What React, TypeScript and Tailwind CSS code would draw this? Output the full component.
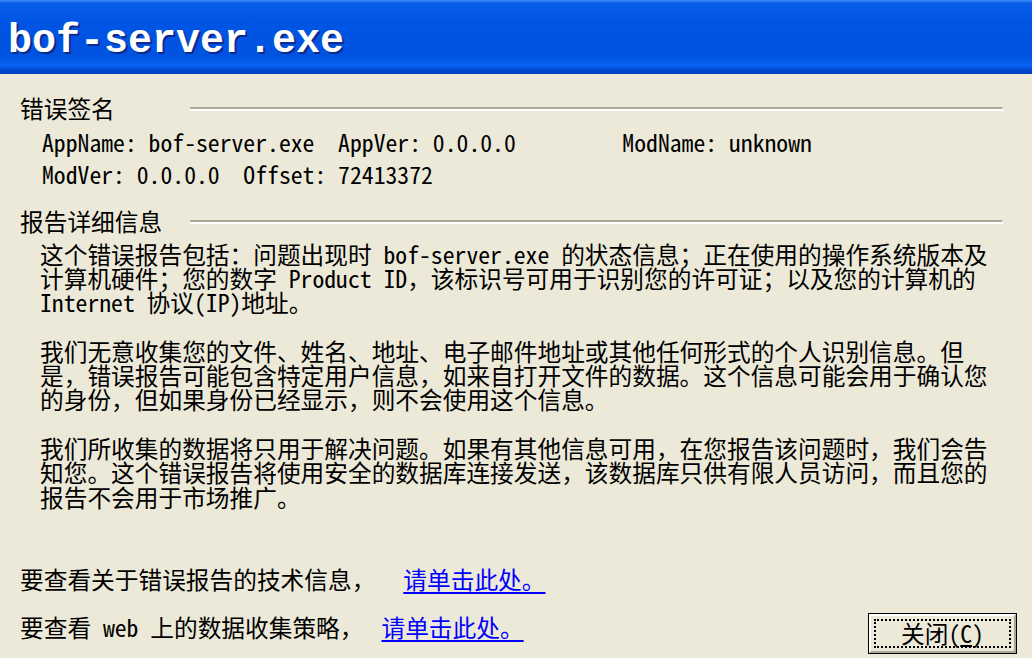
import React from 'react';

const cjk = '[font-family:"Noto_Sans_Mono_CJK_SC","Noto_Sans_CJK_SC",monospace]';

function Heading({ label }: { label: string }) {
  return (
    <div className="flex items-center h-[24.3px]">
      <div className="w-[190px] shrink-0 pl-[20px] whitespace-nowrap">{label}</div>
      <div className="flex-1 mr-[29px] mt-[2px] h-[4px] border-t-2 border-[#aca899] border-b-2 border-b-white border-r border-r-white" />
    </div>
  );
}

const details = [
  [
    '这个错误报告包括：问题出现时 bof-server.exe 的状态信息；正在使用的操作系统版本及',
    '计算机硬件；您的数字 Product ID，该标识号可用于识别您的许可证；以及您的计算机的',
    'Internet 协议(IP)地址。',
  ],
  [
    '我们无意收集您的文件、姓名、地址、电子邮件地址或其他任何形式的个人识别信息。但',
    '是，错误报告可能包含特定用户信息，如来自打开文件的数据。这个信息可能会用于确认您',
    '的身份，但如果身份已经显示，则不会使用这个信息。',
  ],
  [
    '我们所收集的数据将只用于解决问题。如果有其他信息可用，在您报告该问题时，我们会告',
    '知您。这个错误报告将使用安全的数据库连接发送，该数据库只供有限人员访问，而且您的',
    '报告不会用于市场推广。',
  ],
];

export default function App() {
  return (
    <div className={`w-[1032px] h-[658px] overflow-hidden bg-[#ece9d8] text-black flex flex-col text-[23.7px] leading-[24.3px] ${cjk}`}>
      {/* title bar */}
      <div className="h-[74px] shrink-0 flex items-center pl-[8px] bg-[linear-gradient(to_bottom,#3d8ef7_0px,#0a5fe8_3px,#0055e4_20px,#0052df_55px,#0862f2_66px,#0048ce_70px,#003fbf_74px)]">
        <span className="mt-[10px] text-white font-bold text-[40px] leading-none whitespace-pre [font-family:'Liberation_Mono',monospace] [text-shadow:2px_2px_0_#0b2c8c]">
          bof-server.exe
        </span>
      </div>

      <div className="mt-[22px]">
        <Heading label="错误签名" />
      </div>
      <div className="mt-[6px] pl-[42px] leading-[32px] whitespace-pre">
        <div>AppName: bof-server.exe  AppVer: 0.0.0.0         ModName: unknown</div>
        <div>ModVer: 0.0.0.0  Offset: 72413372</div>
      </div>

      <div className="mt-[19px]">
        <Heading label="报告详细信息" />
      </div>
      <div className="mt-[8px] pl-[40px] whitespace-pre">
        {details.map((para, i) => (
          <div key={i} className={i > 0 ? 'mt-[24.3px]' : ''}>
            {para.map((line) => (
              <div key={line}>{line}</div>
            ))}
          </div>
        ))}
      </div>

      {/* footer */}
      <div className="mt-[58px] pl-[20px] whitespace-pre flex">
        <span>要查看关于错误报告的技术信息，</span>
        <a href="#" className="ml-[28px] text-[#0000ff] underline underline-offset-[3px]">请单击此处。</a>
      </div>
      <div className="mt-[21.7px] pl-[20px] pr-[15px] flex items-start justify-between">
        <div className="mt-[2px] whitespace-pre flex">
          <span>要查看 web 上的数据收集策略，</span>
          <a href="#" className="ml-[18px] text-[#0000ff] underline underline-offset-[3px]">请单击此处。</a>
        </div>
        <button className="w-[149px] h-[41px] border border-black bg-[#ece9d8] p-0">
          <div className="h-full border-t-2 border-l-2 border-white border-b-2 border-r-2 border-b-[#aca899] border-r-[#aca899] p-[3px]">
            <div className="h-full border-2 border-dotted border-black flex items-center justify-center">
              <span>关闭(<span className="underline">C</span>)</span>
            </div>
          </div>
        </button>
      </div>
    </div>
  );
}
